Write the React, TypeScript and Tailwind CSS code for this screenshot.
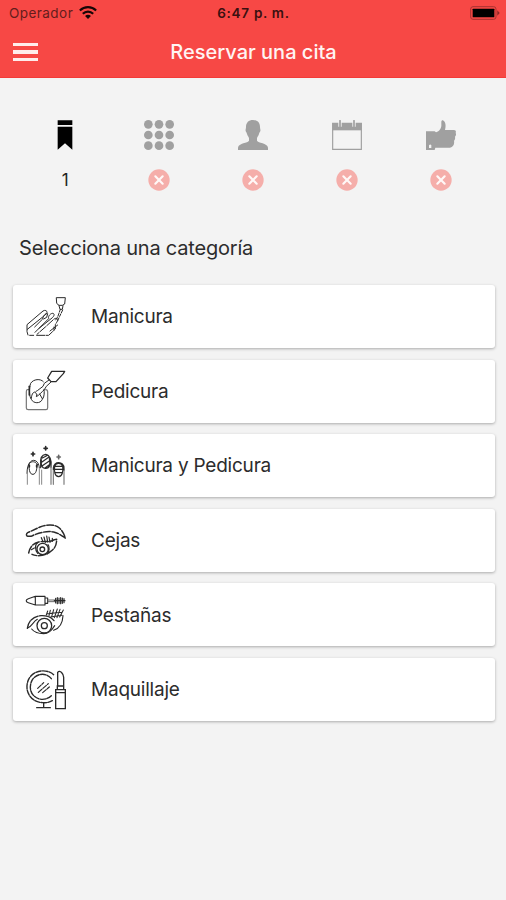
import type { ReactNode } from 'react';

const steps = [
  {
    id: 'category',
    icon: (
      <svg viewBox="0 0 90 90" className="w-[30px] h-[30px]" fill="#000">
        <path d="M23 1H67V15H23Z M23 20H67V89L45 70L23 89Z" />
      </svg>
    ),
  },
  {
    id: 'service',
    icon: (
      <svg viewBox="0 0 90 90" className="w-[30px] h-[30px]" fill="#a0a0a0">
        {[13, 45, 77].map((y) => [13, 45, 77].map((x) => <circle key={`${x}-${y}`} cx={x} cy={y} r="13" />))}
      </svg>
    ),
  },
  {
    id: 'person',
    icon: (
      <svg viewBox="0 0 90 90" className="w-[30px] h-[30px]" fill="#a0a0a0">
        <path d="M45 0C58 0 66 8 66 21C66 27 68 28 67 33C66 37 64 37 63 42C61 49 57 51 57 55V62C60 69 88 68 90 83V90H0V83C2 68 30 69 33 62V55C33 51 29 49 27 42C26 37 24 37 23 33C22 28 24 27 24 21C24 8 32 0 45 0Z" />
      </svg>
    ),
  },
  {
    id: 'date',
    icon: (
      <svg viewBox="0 0 90 90" className="w-[30px] h-[30px]">
        <path d="M2 10H88V88H2Z" fill="#f4f4f4" stroke="#a0a0a0" strokeWidth="3.5" />
        <path d="M1 9H89V31H1Z" fill="#a0a0a0" />
        <path d="M24 1V20M66 1V20" stroke="#f3f3f3" strokeWidth="10" />
        <path d="M24 2V20M66 2V20" stroke="#a0a0a0" strokeWidth="5" strokeLinecap="round" />
      </svg>
    ),
  },
  {
    id: 'confirm',
    icon: (
      <svg viewBox="0 0 90 90" className="w-[30px] h-[30px]" fill="#a0a0a0">
        <path d="M0 34H26L30 37C37 36 45 27 46 18V6C46 1 50 -1 54 3C59 8 60 17 57 30H84C89 30 91 34 89 39C91 43 90 47 87 50C88 56 87 60 84 62C86 72 82 81 72 83H28L26 90H0Z" />
        <path d="M9 76Q13 71 16 76V84H9Z" fill="#f3f3f3" />
      </svg>
    ),
  },
];

function CategoryIcon({ children }: { children: ReactNode }) {
  return (
    <svg
      viewBox="27 33 126 126"
      className="w-[42px] h-[42px] shrink-0"
      fill="none"
      stroke="#2a2a2a"
      strokeWidth="3"
      strokeLinejoin="round"
      strokeLinecap="round"
    >
      {children}
    </svg>
  );
}

const categories = [
  {
    name: 'Manicura',
    icon: (
      <CategoryIcon>
        <path d="M125 38H151L149 57L142 61H132L126 56Z" />
        <path d="M132 62L135 73H142L144 62" />
        <path d="M136 73L128 96L120 108M143 75L134 94L127 109" strokeDasharray="9 4" />
        <path d="M39 150L36 140V119L84 78C90 74 97 77 96 83L88 92L37 133" />
        <path d="M59 126L83 102C86 90 90 86 98 86L95 97L86 102" />
        <path d="M60 142L101 101C98 93 108 84 114 85C120 87 117 94 111 99L72 130" />
        <path d="M65 151H101L121 132V119L128 107C130 98 120 98 115 104L91 126L66 148" strokeDasharray="24 4" />
        <path d="M105 138L128 120M44 151H56M117 126V135" />
      </CategoryIcon>
    ),
  },
  {
    name: 'Pedicura',
    icon: (
      <CategoryIcon>
        <path d="M43 92H37C34 92 34 94 34 98V147C34 151 36 152 40 152H93C97 152 98 150 98 146V99C98 94 97 92 92 92" stroke="#777" strokeWidth="3.6" />
        <path d="M85 68C77 58 55 60 47 73C42 88 42 112 49 121C55 134 76 135 82 121C89 113 88 98 87 91" />
        <path d="M43 82V108" strokeWidth="5" />
        <path d="M49 118C50 102 57 98 60 99M82 119L74 105" />
        <path d="M110 37H149L145 44L123 68H108L98 57Z" strokeWidth="3.8" />
        <path d="M102 63L88 73L84 82L67 95C58 99 61 104 66 105L64 113C71 110 80 99 88 92L94 82L107 70" />
      </CategoryIcon>
    ),
  },
  {
    name: 'Manicura y Pedicura',
    icon: (
      <CategoryIcon>
        <g strokeWidth="5">
          <path d="M54 55V65M49 60H59M92 38V48M87 43H97" />
          <path d="M131 64V74M126 69H136" stroke="#666" />
        </g>
        <path d="M36 118C36 85 50 79 56 79C67 80 72 90 73 101M41 91C43 113 45 121 54 121C63 120 65 109 67 91M43 88C51 80 61 82 67 91" />
        <path d="M43 93V99M65 93V99" strokeWidth="5" />
        <path d="M37 118V151M73 102V151M80 108V151" stroke="#888" />
        <path d="M108 99V151M115 106V151M147 108V151" stroke="#777" strokeWidth="3.4" />
        <path d="M77 101V91C75 71 83 62 92 61C104 63 111 78 108 99M79 77C78 94 80 104 92 103C105 103 107 90 103 74M82 72L94 66M81 84L101 70M82 95L104 80M91 101L105 91" strokeWidth="3.6" />
        <path d="M115 106V102C116 80 147 80 147 103V108M119 96C117 113 119 127 131 128C142 127 145 112 143 96C137 85 124 86 119 96ZM120 97H142M118 106H144M119 116H142" strokeWidth="3.6" />
      </CategoryIcon>
    ),
  },
  {
    name: 'Cejas',
    icon: (
      <CategoryIcon>
        <path d="M38 85C33 84 33 77 38 74L75 57C95 49 120 48 133 60C142 68 148 80 151 90C139 83 130 75 116 72C93 67 64 77 48 85Z" strokeWidth="4.4" strokeDasharray="20 5" />
        <path d="M41 135C45 116 55 106 71 102C90 98 105 104 118 95L125 94C125 111 120 122 106 131C87 146 63 145 51 139" strokeWidth="4.4" strokeDasharray="22 5" />
        <circle cx="83" cy="123" r="17" strokeWidth="4" />
        <circle cx="82" cy="124" r="7" strokeWidth="4" />
        <path d="M68 104C59 109 60 126 68 136M99 110C105 117 103 130 96 138M84 101L79 89M91 103L87 87M98 102L95 84M105 103L102 87M112 100V91M49 125L58 120" strokeWidth="3.6" />
      </CategoryIcon>
    ),
  },
  {
    name: 'Pestañas',
    icon: (
      <CategoryIcon>
        <path d="M61 40H90V66H61L40 59C31 56 32 50 40 47ZM61 40V65M91 45H98V61H91" strokeWidth="3.4" />
        <path d="M99 51H122M99 56H122" stroke="#666" />
        <path d="M122 46V60M127 44V62M132 45V61M137 44V62M142 45V61M147 47V59M118 53H150" strokeWidth="3.6" />
        <path d="M37 136C40 112 58 99 78 98C96 97 108 102 117 113" strokeWidth="4" strokeDasharray="24 4" />
        <path d="M38 135C50 131 54 116 67 109M50 138C58 148 70 152 86 152C100 152 108 146 119 128M116 142C132 136 143 119 144 98" strokeWidth="3.4" />
        <circle cx="88" cy="128" r="22" strokeWidth="3.8" />
        <circle cx="88" cy="128" r="9" strokeWidth="3.8" />
        <path d="M94 96L98 84M102 98L106 82M110 101L116 80M118 104L127 78M126 104L135 79M134 102L145 81M96 92L141 88M107 102L141 97" strokeWidth="3.2" />
      </CategoryIcon>
    ),
  },
  {
    name: 'Maquillaje',
    icon: (
      <CategoryIcon>
        <path d="M116 53C94 34 57 39 42 65C25 97 44 135 83 137C94 138 103 136 112 131M109 65C93 45 63 49 51 70C37 99 54 126 82 127C94 127 103 122 109 116" strokeWidth="4.2" strokeDasharray="16 4" />
        <path d="M68 94L86 77M70 106L100 80M83 107L103 90" strokeWidth="3.6" strokeDasharray="14 4" />
        <path d="M86 138V151M65 152H106" strokeWidth="4" />
        <path d="M122 98H151V155H122ZM127 97V87H146V97M128 86V46C135 37 146 51 146 61V86M122 107H151" strokeWidth="4" strokeLinejoin="miter" />
      </CategoryIcon>
    ),
  },
];

function Header() {
  return (
    <header className="h-[78px] bg-[#f74845] border-b border-[#f33b38]">
      <div className="relative h-[27px] flex items-center justify-between pl-[9px] pr-[6px] text-[13.5px] text-[#641d1c]">
        <div className="flex items-center gap-[6px]">
          <span className="tracking-[0.45px]">Operador</span>
          <svg viewBox="0 0 54 40" className="w-[18px] h-[13px] -mt-[2px]" fill="none" stroke="#160606" strokeWidth="6.5">
            <path d="M2 14C16 0 38 0 52 14M11 24C20 15 34 15 43 24" />
            <path d="M18 31C23 26 31 26 36 31L27 40Z" fill="#160606" stroke="none" />
          </svg>
        </div>
        <span className="absolute inset-x-0 pl-[1px] text-center font-semibold text-[13.5px] tracking-[0.7px] text-[#3a1010]">
          6:47 p. m.
        </span>
        <svg viewBox="0 0 90 42" className="w-[30px] h-[14px] -mt-[1px]">
          <rect x="2" y="2" width="76" height="38" rx="7" fill="none" stroke="#a93231" strokeWidth="3" />
          <rect x="8" y="8" width="65" height="26" rx="2" fill="#000" />
          <path d="M82 13L89 21L82 29Z" fill="#8c2827" />
        </svg>
      </div>
      <div className="relative h-[50px] flex items-center px-[13px]">
        <button aria-label="Menu" className="flex flex-col gap-[4px]">
          <span className="w-[25px] h-[3.5px] bg-[#ffeceb]" />
          <span className="w-[25px] h-[3.5px] bg-[#ffeceb]" />
          <span className="w-[25px] h-[3.5px] bg-[#ffeceb]" />
        </button>
        <h1 className="absolute inset-x-0 pl-[1px] text-center text-[20px] font-medium text-[#fff4f3]">
          Reservar una cita
        </h1>
      </div>
    </header>
  );
}

export default function App() {
  return (
    <div className="min-h-screen bg-[#f3f3f3] font-['Inter',sans-serif] overflow-hidden">
      <Header />

      <div className="grid grid-cols-5 pl-[18.3px] pr-[17.7px] pt-[42px]">
        {steps.map((step, i) => (
          <div key={step.id} className="flex flex-col items-center">
            {step.icon}
            <div className="mt-[18px] h-6 flex items-center justify-center">
              {i === 0 ? (
                <span className="pt-[2px] text-[17px] text-[#222]">1</span>
              ) : (
                <svg viewBox="0 0 66 66" className="w-[22px] h-[22px]">
                  <circle cx="33" cy="33" r="32" fill="#f5aeaa" />
                  <path d="M22 22L44 44M44 22L22 44" stroke="#fff8f7" strokeWidth="6.5" strokeLinecap="round" />
                </svg>
              )}
            </div>
          </div>
        ))}
      </div>

      <h2 className="mt-[42px] pl-[19px] text-[20px] leading-7 tracking-[-0.2px] text-[#2c2c2c]">
        Selecciona una categoría
      </h2>

      <div className="mt-[23px] pl-[12.5px] pr-[11px] flex flex-col gap-[11.6px]">
        {categories.map((category) => (
          <button
            key={category.name}
            className="h-[63px] flex items-center gap-[25px] pl-[11.5px] bg-white rounded-[3px] shadow-[0_1px_3px_rgba(0,0,0,0.3)] text-left"
          >
            {category.icon}
            <span className="pt-[2px] text-[19px] tracking-[-0.22px] text-[#2c2c2c]">{category.name}</span>
          </button>
        ))}
      </div>
    </div>
  );
}
